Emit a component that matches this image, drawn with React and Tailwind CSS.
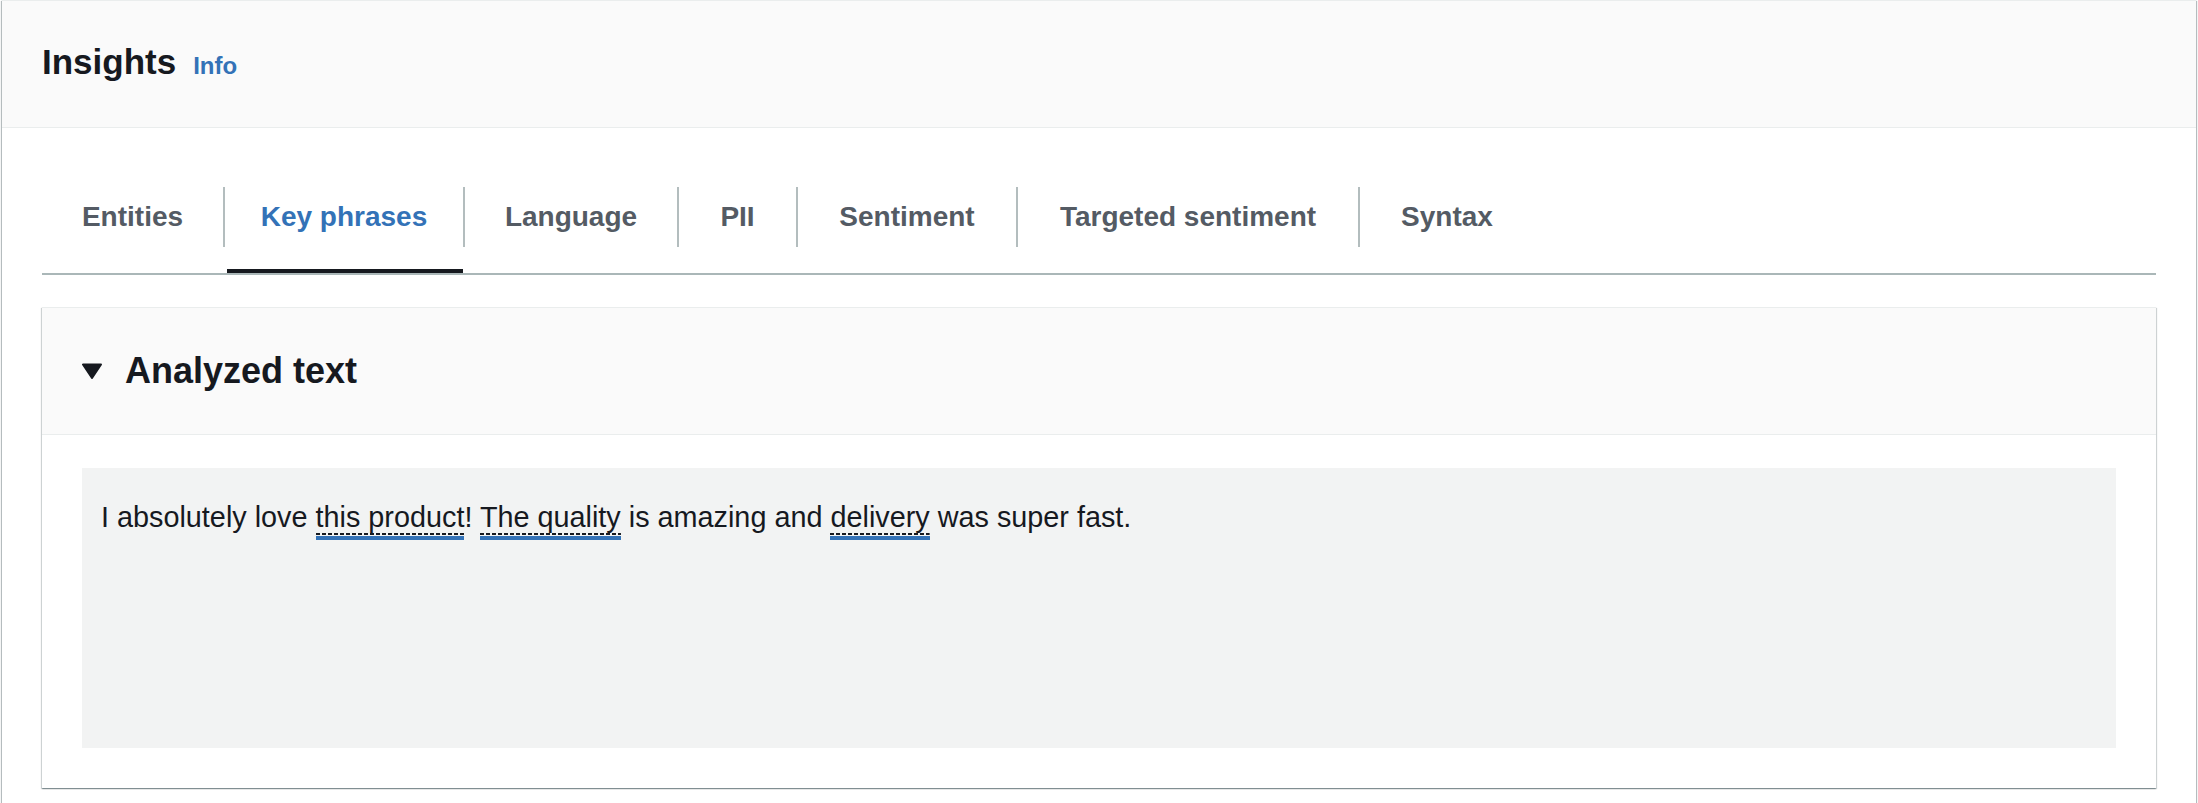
import React from "react";

const tabs = [
  { label: "Entities", w: "w-[181px]" },
  { label: "Key phrases", w: "w-[238px]", active: true },
  { label: "Language", w: "w-[212px]" },
  { label: "PII", w: "w-[117px]" },
  { label: "Sentiment", w: "w-[218px]" },
  { label: "Targeted sentiment", w: "w-[340px]" },
  { label: "Syntax", w: "w-[174px]" },
];

function Phrase({ children }) {
  return (
    <span className="border-b-[4px] border-[#3372b7] pb-[3px]">
      <span className="pb-[2px] bg-[repeating-linear-gradient(90deg,#16191f_0_4px,transparent_4px_6px)] bg-no-repeat bg-bottom bg-[length:100%_2px]">
        {children}
      </span>
    </span>
  );
}

export default function App() {
  return (
    <div className="min-h-screen bg-white font-['Liberation_Sans',Arial,sans-serif] text-[#16191f]">
      <div className="mx-[2px] border-t border-[#eaeded] bg-white pb-[40px] shadow-[0_1px_1px_0_rgba(0,28,36,0.3),1px_1px_1px_0_rgba(0,28,36,0.25),-1px_1px_1px_0_rgba(0,28,36,0.25)]">
        {/* Header */}
        <div className="flex h-[127px] items-center border-b border-[#eaeded] bg-[#fafafa] pb-[4px] pl-[40px]">
          <div className="flex items-baseline">
            <h2 className="text-[35px] font-bold leading-[44px] text-[#16191f]">Insights</h2>
            <span className="ml-[17px] text-[24px] font-bold leading-[30px] text-[#3372b7]">Info</span>
          </div>
        </div>

        <div className="px-[40px] pt-[33px]">
          {/* Tabs */}
          <div className="flex items-stretch border-b-2 border-[#aab7b8]">
            {tabs.map((t, i) => (
              <React.Fragment key={t.label}>
                {i > 0 && <span className="h-[60px] w-[2px] self-center bg-[#b3bdbe]" />}
                <div
                  className={`relative flex h-[112px] items-center justify-center ${t.w} text-[28px] font-bold leading-[36px] ${
                    t.active ? "text-[#3372b7]" : "text-[#545b64]"
                  }`}
                >
                  {t.label}
                  {t.active && <span className="absolute bottom-0 left-[2px] right-0 h-[4px] bg-[#16191f]" />}
                </div>
              </React.Fragment>
            ))}
          </div>

          {/* Card */}
          <div className="mt-[32px] border-t border-[#eaeded] bg-white shadow-[0_1px_1px_0_rgba(0,28,36,0.3),1px_1px_1px_0_rgba(0,28,36,0.15),-1px_1px_1px_0_rgba(0,28,36,0.15)]">
            <div className="flex h-[127px] items-center border-b border-[#eaeded] bg-[#fafafa] pl-[40px]">
              <svg width="20" height="16" viewBox="0 0 20 16" className="mr-[23px]">
                <path d="M1 1.5 L19 1.5 L10 15 Z" fill="#16191f" stroke="#16191f" strokeWidth="2" strokeLinejoin="round" />
              </svg>
              <h3 className="text-[36px] font-bold leading-[44px] text-[#16191f]">Analyzed text</h3>
            </div>
            <div className="px-[40px] pb-[40px] pt-[33px]">
              <div className="h-[280px] bg-[#f2f3f3] pl-[19px] pr-[18px] pt-[29px] text-[28.8px] leading-[40px] text-[#16191f]">
                I absolutely love <Phrase>this product</Phrase>! <Phrase>The quality</Phrase> is amazing and{" "}
                <Phrase>delivery</Phrase> was super fast.
              </div>
            </div>
          </div>
        </div>
      </div>
    </div>
  );
}
